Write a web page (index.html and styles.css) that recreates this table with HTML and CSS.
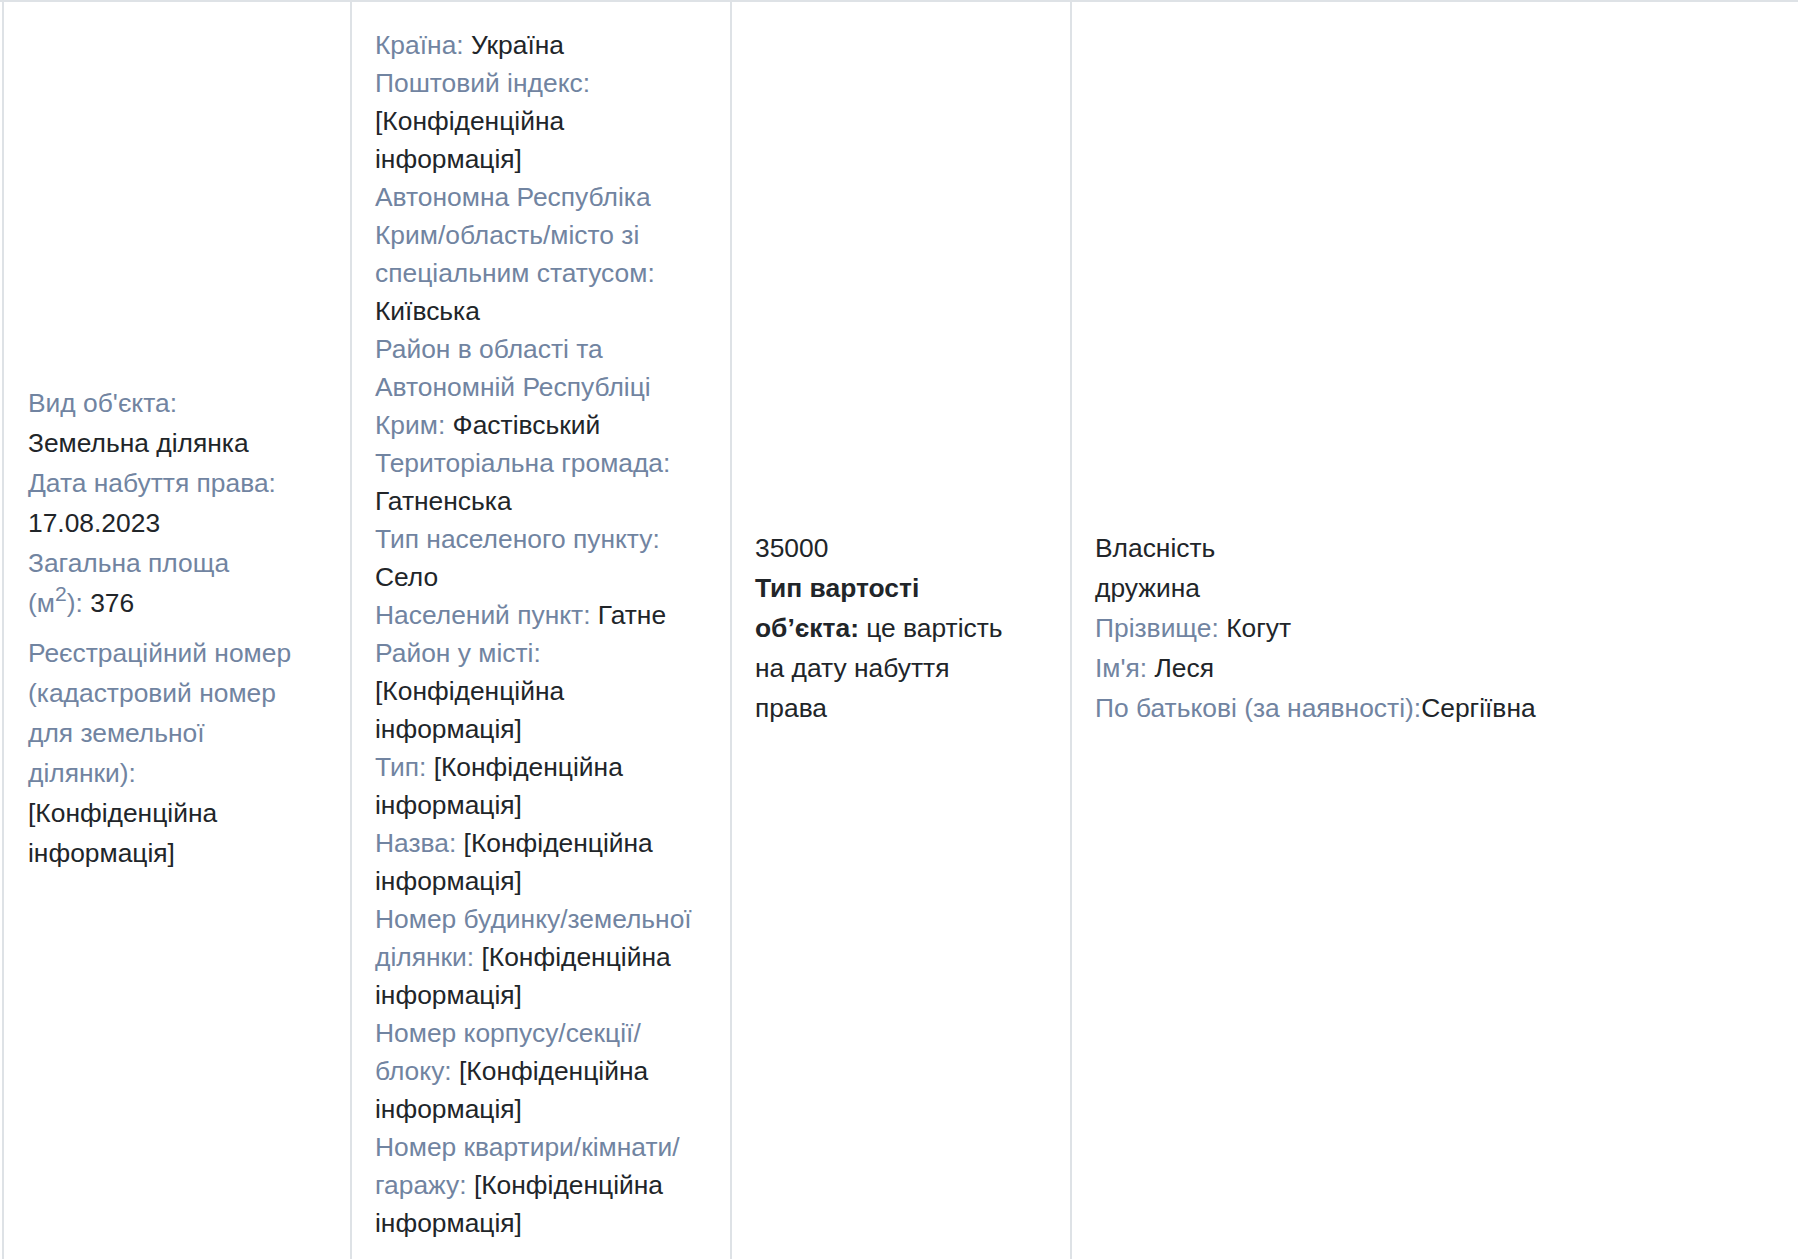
FILE: index.html
```html
<!DOCTYPE html>
<html lang="uk">
<head>
  <meta charset="UTF-8" />
  <title>Об'єкти нерухомості</title>
  <link rel="stylesheet" href="styles.css">
</head>
<body>

  <div class="decl-row">

    <div class="cell cell-object">
      <div class="item"><span class="label">Вид об'єкта:</span> <span class="nowrap">Земельна ділянка</span></div>
      <div class="item"><span class="label">Дата набуття права:</span> 17.08.2023</div>
      <div class="item item-area"><span class="label">Загальна площа <span class="nowrap">(м<sup>2</sup>):</span></span><span class="nowrap">&nbsp;376</span></div>
      <div class="item"><span class="label">Реєстраційний номер (кадастровий номер для земельної ділянки):</span> [Конфіденційна інформація]</div>
    </div>

    <div class="cell cell-address">
      <div class="item"><span class="label">Країна:</span> Україна</div>
      <div class="item"><span class="label">Поштовий індекс:</span> [Конфіденційна інформація]</div>
      <div class="item"><span class="label">Автономна Республіка Крим/область/місто зі спеціальним статусом:</span> Київська</div>
      <div class="item"><span class="label">Район в області та Автономній Республіці Крим:</span> Фастівський</div>
      <div class="item"><span class="label">Територіальна громада:</span> Гатненська</div>
      <div class="item"><span class="label">Тип населеного пункту:</span> Село</div>
      <div class="item"><span class="label">Населений пункт:</span> Гатне</div>
      <div class="item"><span class="label">Район у місті:</span> [Конфіденційна інформація]</div>
      <div class="item"><span class="label">Тип:</span> [Конфіденційна інформація]</div>
      <div class="item"><span class="label">Назва:</span> [Конфіденційна інформація]</div>
      <div class="item"><span class="label">Номер будинку/земельної ділянки:</span> [Конфіденційна інформація]</div>
      <div class="item"><span class="label">Номер корпусу/секції/<wbr>блоку:</span> [Конфіденційна інформація]</div>
      <div class="item"><span class="label">Номер квартири/кімнати/<wbr>гаражу:</span> [Конфіденційна інформація]</div>
    </div>

    <div class="cell cell-cost">
      <div class="item">35000</div>
      <div class="item"><b>Тип вартості об’єкта:</b> це вартість на дату набуття права</div>
    </div>

    <div class="cell cell-owner">
      <div class="item">Власність</div>
      <div class="item">дружина</div>
      <div class="item"><span class="label">Прізвище:</span> Когут</div>
      <div class="item"><span class="label">Ім'я:</span> Леся</div>
      <div class="item"><span class="label">По батькові (за наявності):</span>Сергіївна</div>
    </div>

  </div>

</body>
</html>
```

FILE: styles.css
```css
* {
  box-sizing: border-box;
  margin: 0;
  padding: 0;
}

body {
  background-color: #fff;
  color: #212529;
  font-family: 'Liberation Sans', Arial, Helvetica, sans-serif;
  font-size: 26.4px;
}

.decl-row {
  display: grid;
  grid-template-columns: 348px 380px 340px 1fr;
  min-height: 1274px;
  border-top: 2px solid #dee2e6;
  padding-left: 2px;
}

.cell {
  display: flex;
  flex-direction: column;
  justify-content: center;
  border-left: 2px solid #dee2e6;
  padding: 24px 23px 44px;
  line-height: 40px;
}

.cell-object {
  padding-left: 24px;
  padding-right: 50px;
}

.cell-address {
  justify-content: flex-start;
  line-height: 38px;
  padding-bottom: 0;
}

.cell-cost {
  padding-right: 57px;
}

.item-area {
  margin-bottom: 10px;
}

.label {
  color: #7184a1;
}

.nowrap {
  white-space: nowrap;
}

sup {
  font-size: 0.8em;
  line-height: 0;
  vertical-align: 0.5em;
}

b {
  font-weight: bold;
}
```
